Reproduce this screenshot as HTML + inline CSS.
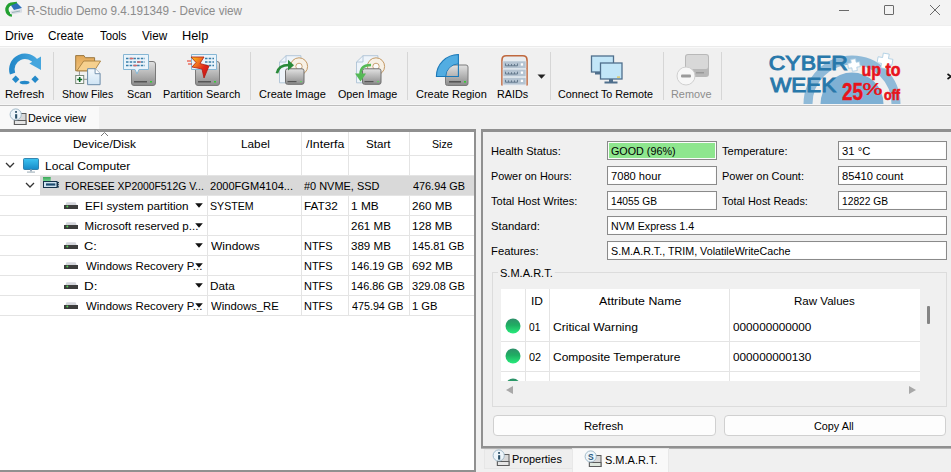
<!DOCTYPE html>
<html><head><meta charset="utf-8">
<style>
*{margin:0;padding:0;box-sizing:border-box}
html,body{width:951px;height:472px;overflow:hidden;background:#f0f0f0;font-family:"Liberation Sans",sans-serif;position:relative}
.a{position:absolute}
.t{position:absolute;white-space:nowrap;line-height:1;transform-origin:0 0}
.sep{position:absolute;top:52px;width:1px;height:48px;background:#d6d6d6}
.box{position:absolute;border:1px solid #8a8a8a;background:#fff;box-shadow:inset 0 0 0 1px #fcfcfc}
.hl{position:absolute;height:1px;background:#e4e4e4}
.vl{position:absolute;width:1px;background:#e4e4e4}
svg{position:absolute;overflow:visible}
</style></head><body>
<!-- title bar -->
<div class="a" style="left:0;top:0;width:951px;height:25px;background:#f3f3f3"></div>
<svg style="left:6px;top:2px" width="17" height="14" viewBox="0 0 17 14">
  <path d="M6 13 A5.5 5.5 0 0 1 5 2.2 L11 1.5" stroke="#22a030" stroke-width="3.4" fill="none" stroke-linejoin="round"/>
  <path d="M4 4 L16 1.5 L16 9 L4 12 Z" fill="#f2f6fa"/>
  <path d="M5 3.5 L11 1 L16 6 L8 8 Z" fill="#2f6fb8"/>
  <path d="M4.5 9 L16 7 L16 10.5 L5 12.5 Z" fill="#d8dde4"/>
  <path d="M6 10.5 L14 9" stroke="#8aa" stroke-width="0.8"/>
</svg>
<div class="a" style="left:839px;top:10px;width:10px;height:1px;background:#6a6a6a"></div>
<div class="a" style="left:884px;top:5px;width:10px;height:10px;border:1px solid #6a6a6a;border-radius:1px"></div>
<svg style="left:930px;top:5px" width="10" height="10" viewBox="0 0 10 10"><path d="M0 0L10 10M10 0L0 10" stroke="#6a6a6a" stroke-width="1"/></svg>
<!-- menu -->
<div class="a" style="left:0;top:25px;width:951px;height:1px;background:#efefef"></div>
<div class="a" style="left:0;top:26px;width:951px;height:20px;background:#fff"></div>
<div class="a" style="left:0;top:46px;width:951px;height:1px;background:#ebebeb"></div>
<div class="a" style="left:0;top:47px;width:951px;height:1px;background:#f9f9f9"></div>
<!-- toolbar -->
<div class="a" style="left:0;top:104px;width:951px;height:1px;background:#f6f6f6"></div>
<div class="a" style="left:0;top:105px;width:951px;height:1px;background:#bdbdbd"></div>
<div class="a" style="left:0;top:106px;width:951px;height:1px;background:#f6f6f6"></div>
<div class="sep" style="left:53px"></div>
<div class="sep" style="left:250px"></div>
<div class="sep" style="left:407px"></div>
<div class="sep" style="left:550px"></div>
<div class="sep" style="left:663px"></div>
<div class="sep" style="left:721px"></div>

<!-- refresh icon -->
<svg style="left:4px;top:50px" width="44" height="40" viewBox="0 0 44 40">
  <defs><linearGradient id="rf" x1="0" y1="0" x2="1" y2="0"><stop offset="0" stop-color="#2489c9"/><stop offset="1" stop-color="#45a6de"/></linearGradient></defs>
  <path d="M8.55 23.7 A13.15 13.15 0 0 1 32.4 12.9" stroke="url(#rf)" stroke-width="5.5" fill="none"/>
  <path d="M37 6.4 L37 20 L25.4 13.6 Z" fill="#45a6de"/>
  <path d="M11.7 25.6 L15.4 29.3 L11.7 33 L8 29.3 Z" fill="#2489c9"/>
  <path d="M31.1 25.6 L34.8 29.3 L31.1 33 L27.4 29.3 Z" fill="#2489c9"/>
  <ellipse cx="20.6" cy="32.5" rx="4.9" ry="1.8" fill="#2489c9"/>
</svg>
<!-- show files icon -->
<svg style="left:68px;top:50px" width="44" height="40" viewBox="0 0 44 40">
  <defs><linearGradient id="fd" x1="0" y1="0" x2="0" y2="1"><stop offset="0" stop-color="#e2a858"/><stop offset="1" stop-color="#f0c27a"/></linearGradient>
  <linearGradient id="dc" x1="0" y1="0" x2="0" y2="1"><stop offset="0" stop-color="#f4f9fd"/><stop offset="1" stop-color="#cfe4f4"/></linearGradient></defs>
  <path d="M11.45 21.2 V25 M15.7 29.3 H19.1" stroke="#8a8a8a" stroke-width="0.9"/>
  <path d="M7.7 5.6 H16 L17.3 7.7 H26.6 V20.8 H7.7 Z" fill="url(#fd)" stroke="#9a7840" stroke-width="1"/>
  <path d="M8.9 20.8 L15.7 11 H32.6 L26.3 20.8 Z" fill="#f6d08e" stroke="#a88040" stroke-width="0.9"/>
  <path d="M19.6 18.7 H27.1 L32.1 23.7 V34.7 H19.6 Z" fill="url(#dc)" stroke="#6a8aa8" stroke-width="1"/>
  <path d="M27.1 18.7 V23.7 H32.1" fill="#fff" stroke="#6a8aa8" stroke-width="0.9"/>
  <rect x="7.7" y="25.5" width="8" height="8" fill="#fafafa" stroke="#7a8a7a" stroke-width="1"/>
  <path d="M11.7 27 V32 M9.2 29.5 H14.2" stroke="#0a6a20" stroke-width="1.6"/>
</svg>
<!-- scan icon -->
<svg style="left:123px;top:54px" width="33" height="32" viewBox="0 0 33 32">
  <defs><linearGradient id="hd" x1="0" y1="0" x2="0" y2="1"><stop offset="0" stop-color="#e2e2e2"/><stop offset="0.65" stop-color="#a9a9a9"/><stop offset="1" stop-color="#8a8a8a"/></linearGradient></defs>
  <rect x="8.5" y="7.5" width="24" height="24" rx="2.5" fill="url(#hd)" stroke="#7a7a7a" stroke-width="1"/>
  <rect x="11" y="27" width="13" height="1.5" fill="#555"/>
  <rect x="27" y="27" width="2" height="1.5" fill="#3c3"/>
  <path d="M0.5 0.5 H25.5 V15.5 H16 L14 20 L12 15.5 H0.5 Z" fill="#eaf4fb" stroke="#86b6d4" stroke-width="1"/>
  <path d="M3 4.5 H22 M3 8 H22 M3 11.5 H22" stroke="#3a7ea8" stroke-width="1.3" stroke-dasharray="2.5 1.2"/>
  <path d="M6.7 4.5 H10.4 M14.1 8 H17.8 M10.4 11.5 H14.1" stroke="#d46a6a" stroke-width="1.3"/>
</svg>
<!-- partition search icon -->
<svg style="left:187px;top:54px" width="33" height="32" viewBox="0 0 33 32">
  <rect x="8.5" y="7.5" width="24" height="24" rx="2.5" fill="url(#hd)" stroke="#7a7a7a" stroke-width="1"/>
  <rect x="11" y="27" width="13" height="1.5" fill="#555"/>
  <rect x="27" y="27" width="2" height="1.5" fill="#3c3"/>
  <path d="M4.5 0.5 H29.5 V15.5 H4.5 Z" fill="#eaf4fb" stroke="#86b6d4" stroke-width="1"/>
  <path d="M18 4.5 H27 M18 8 H27 M18 11.5 H27" stroke="#3a7ea8" stroke-width="1.3" stroke-dasharray="2.5 1.2"/>
  <defs><linearGradient id="bolt" x1="0" y1="0" x2="1" y2="1"><stop offset="0" stop-color="#f8c41c"/><stop offset="0.35" stop-color="#f07020"/><stop offset="0.6" stop-color="#e0281c"/><stop offset="1" stop-color="#c01010"/></linearGradient></defs>
  <path d="M4 3 H17 L13 9.5 L22 12 L17 24 L15 15 L5 13 L9 8.5 Z" fill="url(#bolt)" stroke="#b01a10" stroke-width="0.8"/>
  <path d="M0 7 H4 M1 10 H5" stroke="#e8301a" stroke-width="1.2"/>
</svg>
<!-- create image icon -->
<svg style="left:270px;top:50px" width="40" height="38" viewBox="0 0 40 38">
  <path d="M9.5 12 L16 5.7 H30.9 V32.8 H9.5 Z" fill="#eef4fa" stroke="#a4bcd2" stroke-width="0.8"/>
  <path d="M9.5 12 H16 V5.7" fill="none" stroke="#a4bcd2" stroke-width="0.8"/>
  <circle cx="29" cy="16.4" r="8.6" fill="#f7f1e6" stroke="#c49a66" stroke-width="1"/>
  <circle cx="29" cy="16.4" r="3.2" fill="#fbfbfb" stroke="#c49a66" stroke-width="0.9"/>
  <rect x="15.5" y="18.8" width="18.5" height="15.5" rx="2" fill="url(#hd)" stroke="#6e6e6e" stroke-width="1"/>
  <rect x="17.5" y="31" width="9" height="1.2" fill="#555"/>
  <rect x="30" y="31" width="2" height="1.2" fill="#6c6"/>
  <path d="M6.9 23.3 C8 17.5 12.5 15 19 15" stroke="#2a8a3a" stroke-width="2.6" fill="none"/><path d="M18 9.8 L24 15.2 L18 20.6 Z" fill="#2a8a3a"/>
</svg>
<!-- open image icon -->
<svg style="left:347px;top:50px" width="40" height="38" viewBox="0 0 40 38">
  <path d="M9.5 12 L16 5.7 H30.9 V32.8 H9.5 Z" fill="#eef4fa" stroke="#a4bcd2" stroke-width="0.8"/>
  <path d="M9.5 12 H16 V5.7" fill="none" stroke="#a4bcd2" stroke-width="0.8"/>
  <circle cx="29" cy="16.4" r="8.6" fill="#f7f1e6" stroke="#c49a66" stroke-width="1"/>
  <circle cx="29" cy="16.4" r="3.2" fill="#fbfbfb" stroke="#c49a66" stroke-width="0.9"/>
  <rect x="15.5" y="18.8" width="18.5" height="15.5" rx="2" fill="url(#hd)" stroke="#6e6e6e" stroke-width="1"/>
  <rect x="17.5" y="31" width="9" height="1.2" fill="#555"/>
  <rect x="30" y="31" width="2" height="1.2" fill="#6c6"/>
  <path d="M24 15 C17.5 15 13.5 17 13.5 24.5" stroke="#55b955" stroke-width="2.6" fill="none"/><path d="M8 23.5 H19 L13.5 31.5 Z" fill="#55b955"/>
</svg>
<!-- create region icon -->
<svg style="left:435px;top:54px" width="34" height="32" viewBox="0 0 34 32">
  <rect x="10.5" y="11" width="22.5" height="20.5" rx="2" fill="url(#hd)" stroke="#7a7a7a" stroke-width="1"/>
  <rect x="14" y="27" width="12" height="1.6" fill="#555"/>
  <rect x="29" y="27" width="2" height="1.6" fill="#3c3"/>
  <path d="M1.4 22.5 A22 22 0 0 1 23.4 0.5 V9.9 A12.6 12.6 0 0 0 10.8 22.5 Z" fill="#52ade2"/>
  <path d="M1.4 22.5 A22 22 0 0 1 23.4 0.5 V22.5 Z" fill="none" stroke="#1a78b8" stroke-width="1.1"/>
  <path d="M10.8 22.5 A12.6 12.6 0 0 1 23.4 9.9" fill="none" stroke="#1a78b8" stroke-width="0.9"/>
</svg>
<!-- RAIDs icon -->
<svg style="left:501px;top:55px" width="27" height="31" viewBox="0 0 27 31">
  <path d="M1 30.5 V5 Q1 0.8 5.2 0.8 H21.8 Q26 0.8 26 5 V30.5" fill="#e9ecef" stroke="#c0683e" stroke-width="1.6"/>
  <rect x="2" y="6" width="23" height="7.5" fill="#b4c3d1" stroke="#e8eef3" stroke-width="0.6"/>
  <rect x="2" y="14.2" width="23" height="7.5" fill="#b4c3d1" stroke="#e8eef3" stroke-width="0.6"/>
  <rect x="2" y="22.4" width="23" height="7.5" fill="#b4c3d1" stroke="#e8eef3" stroke-width="0.6"/>
  <path d="M4.5 8.5 V10.8 H16.5 V8.5 M7.5 10.8 V9 M10.5 10.8 V9 M13.5 10.8 V9 M4.5 16.7 V19 H16.5 V16.7 M7.5 19 V17.2 M10.5 19 V17.2 M13.5 19 V17.2 M4.5 24.9 V27.2 H16.5 V24.9 M7.5 27.2 V25.4 M10.5 27.2 V25.4 M13.5 27.2 V25.4" stroke="#5f7488" stroke-width="0.9" fill="none"/>
  <rect x="19.8" y="8.3" width="2.3" height="2.3" fill="#fff"/><rect x="19.8" y="16.5" width="2.3" height="2.3" fill="#fff"/><rect x="19.8" y="24.7" width="2.3" height="2.3" fill="#fff"/>
</svg>
<svg style="left:537px;top:74px" width="9" height="5" viewBox="0 0 9 5"><path d="M0.5 0.5H8.5L4.5 4.8Z" fill="#222"/></svg>
<!-- connect icon -->
<svg style="left:590px;top:55px" width="34" height="29" viewBox="0 0 34 29">
  <rect x="1.5" y="1" width="22" height="16" fill="#c2e6f8" stroke="#4f6f8c" stroke-width="1.3"/>
  <rect x="5" y="17" width="5" height="2.5" fill="#4f6f8c"/>
  <rect x="10.5" y="8" width="21.5" height="16" fill="#c2e6f8" stroke="#4f6f8c" stroke-width="1.3"/>
  <rect x="27" y="21.5" width="3" height="1.2" fill="#e8c040"/>
  <rect x="19" y="24" width="4" height="3" fill="#4f6f8c"/>
  <rect x="14.5" y="26.5" width="13" height="2" fill="#4f6f8c"/>
</svg>
<!-- remove icon (disabled) -->
<svg style="left:676px;top:53px" width="34" height="33" viewBox="0 0 34 33">
  <rect x="9" y="1" width="24" height="23" rx="3" fill="#b8b8b8"/>
  <rect x="10" y="2" width="22" height="14" rx="2" fill="#d8d8d8"/>
  <rect x="20" y="19" width="8" height="1.5" fill="#999"/>
  <circle cx="10" cy="23" r="9" fill="#f7f7f7" stroke="#d0d0d0" stroke-width="1"/>
  <rect x="5" y="21.5" width="10" height="3" rx="1" fill="#9a9a9a"/>
</svg>
<!-- banner -->
<svg style="left:762px;top:48px" width="145" height="57" viewBox="0 0 145 57">
  <path d="M46 56 A44 44 0 0 1 134 56" stroke="#8fbad8" stroke-width="9" fill="none"/>
  <path d="M58.5 56 A31.5 31.5 0 0 1 121.5 56 Z" fill="#7eb0d4"/>
  <g transform="translate(92 17) rotate(-8)"><path d="M-2.5 -6 h5 v3.5 h3.5 v5 h-3.5 v3.5 h-5 v-3.5 h-3.5 v-5 h3.5 z" fill="#ffffff" stroke="#a9cbe2" stroke-width="0.8"/></g>
  <g transform="translate(123 13) rotate(10)"><path d="M-3 -7.5 h6 v4.5 h4.5 v6 h-4.5 v4.5 h-6 v-4.5 h-4.5 v-6 h4.5 z" fill="#ffffff" stroke="#a9cbe2" stroke-width="0.8"/></g>
  <text x="6.8" y="22" font-family="Liberation Sans" font-size="19.5" fill="#2878aa" stroke="#2878aa" stroke-width="0.9" textLength="79" lengthAdjust="spacingAndGlyphs">CYBER</text>
  <text x="8.2" y="43.8" font-family="Liberation Sans" font-size="19.5" fill="#2878aa" stroke="#2878aa" stroke-width="0.9" textLength="66" lengthAdjust="spacingAndGlyphs">WEEK</text>
  <text x="99.5" y="27.5" font-family="Liberation Sans" font-weight="bold" font-size="17.5" fill="#e8141c" stroke="#e8141c" stroke-width="0.6" textLength="39" lengthAdjust="spacingAndGlyphs">up to</text>
  <text x="80" y="52" font-family="Liberation Sans" font-weight="bold" font-size="23" fill="#e8141c" stroke="#e8141c" stroke-width="0.4" textLength="21" lengthAdjust="spacingAndGlyphs">25</text>
  <text x="100.5" y="47" font-family="Liberation Sans" font-weight="bold" font-size="17" fill="#e8141c" textLength="20" lengthAdjust="spacingAndGlyphs">%</text>
  <text x="122" y="52" font-family="Liberation Sans" font-weight="bold" font-size="14" fill="#e8141c" stroke="#e8141c" stroke-width="0.6" textLength="16" lengthAdjust="spacingAndGlyphs">off</text>
</svg>
<svg style="left:946px;top:73px" width="6" height="7" viewBox="0 0 6 7"><path d="M1.5 1 L5 3.5 L1.5 6" stroke="#111" stroke-width="1.6" fill="none"/></svg>

<!-- tab strip -->
<div class="a" style="left:0;top:106px;width:99px;height:23px;background:#f9f9f9"></div>
<svg style="left:6px;top:106px" width="24" height="22" viewBox="0 0 24 22">
  <rect x="8.4" y="7.5" width="11.6" height="11" fill="#d8d8d8" stroke="#5c5c5c" stroke-width="1"/>
  <rect x="8.4" y="14.5" width="11.6" height="4" fill="#e6e6e6" stroke="#5c5c5c" stroke-width="1"/>
  <circle cx="9.7" cy="8.5" r="5.6" fill="#edf5fa" stroke="#9ab3c4" stroke-width="0.9"/>
  <rect x="9.1" y="5.1" width="1.9" height="1.7" fill="#2a5068"/><rect x="9.1" y="8.2" width="2.1" height="4.4" fill="#2a5068"/>
</svg>

<!-- dark top line -->
<div class="a" style="left:0;top:129px;width:476px;height:3px;background:#909090"></div>
<div class="a" style="left:481px;top:129px;width:470px;height:3px;background:#909090"></div>

<!-- LEFT PANEL -->
<div class="a" style="left:0;top:132px;width:474px;height:338px;background:#fff"></div>
<div class="a" style="left:474px;top:129px;width:2px;height:343px;background:#909090"></div>
<div class="a" style="left:0;top:470px;width:476px;height:2px;background:#909090"></div>
<!-- grid -->
<div class="hl" style="left:0;top:155px;width:474px"></div>
<div class="vl" style="left:207px;top:132px;height:183px"></div>
<div class="vl" style="left:301px;top:132px;height:183px"></div>
<div class="vl" style="left:348px;top:132px;height:183px"></div>
<div class="vl" style="left:409px;top:132px;height:183px"></div>
<div class="hl" style="left:0;top:175px;width:474px"></div>
<div class="hl" style="left:0;top:195px;width:474px"></div>
<div class="hl" style="left:0;top:215px;width:474px"></div>
<div class="hl" style="left:0;top:235px;width:474px"></div>
<div class="hl" style="left:0;top:255px;width:474px"></div>
<div class="hl" style="left:0;top:275px;width:474px"></div>
<div class="hl" style="left:0;top:295px;width:474px"></div>
<div class="hl" style="left:0;top:315px;width:474px"></div>
<!-- selected row -->
<div class="a" style="left:40px;top:176px;width:434px;height:19px;background:#d9d9d9"></div>
<!-- sort arrow -->
<svg style="left:100px;top:131px" width="9" height="6" viewBox="0 0 9 6"><path d="M1 5 L4.5 1.5 L8 5" stroke="#777" stroke-width="1" fill="none"/></svg>
<!-- chevrons -->
<svg style="left:5px;top:162px" width="10" height="6" viewBox="0 0 10 6"><path d="M1 1 L5 5 L9 1" stroke="#333" stroke-width="1.3" fill="none"/></svg>
<svg style="left:25px;top:182px" width="10" height="6" viewBox="0 0 10 6"><path d="M1 1 L5 5 L9 1" stroke="#333" stroke-width="1.3" fill="none"/></svg>
<!-- monitor icon -->
<svg style="left:23px;top:158px" width="16" height="15" viewBox="0 0 16 15">
  <defs><linearGradient id="mn" x1="0" y1="0" x2="0" y2="1"><stop offset="0" stop-color="#3cc4f2"/><stop offset="1" stop-color="#168ac8"/></linearGradient></defs>
  <rect x="0.5" y="0.5" width="15" height="11" rx="1" fill="url(#mn)" stroke="#1a6f9e" stroke-width="0.8"/>
  <rect x="7" y="11.5" width="2" height="2" fill="#9ab"/>
  <rect x="4" y="13.5" width="8" height="1.2" fill="#aab8c0"/>
</svg>
<!-- nvme icon -->
<svg style="left:43px;top:177px" width="16" height="11" viewBox="0 0 16 11">
  <defs><linearGradient id="gt" x1="0" y1="0" x2="0" y2="1"><stop offset="0" stop-color="#3aa858"/><stop offset="1" stop-color="#7ed89a"/></linearGradient></defs>
  <rect x="0" y="0" width="7.7" height="5" fill="url(#gt)"/>
  <rect x="0.5" y="4.5" width="13.5" height="6" fill="#cfe3f1" stroke="#15324a" stroke-width="1"/>
  <rect x="3" y="6.4" width="9.3" height="2.2" fill="#1d4b6e"/>
  <path d="M14 5 H16 V6.3 H15 V7.2 H16 V8.3 H15 V9.2 H16 V10.5 H14 Z" fill="#15324a"/>
</svg>
<svg style="left:64px;top:202px" width="14" height="7" viewBox="0 0 14 7"><path d="M1.2 3.2 L2.5 0.2 H11.5 L12.8 3.2 Z" fill="#d4d6dc"/><rect x="0" y="3" width="14" height="4" fill="#3c3c3c"/><circle cx="3.3" cy="4.6" r="1" fill="#5c5"/></svg>
<svg style="left:195px;top:203px" width="8" height="5" viewBox="0 0 8 5"><path d="M0.2 0.3H7.8L4 4.8Z" fill="#111"/></svg>
<svg style="left:64px;top:222px" width="14" height="7" viewBox="0 0 14 7"><path d="M1.2 3.2 L2.5 0.2 H11.5 L12.8 3.2 Z" fill="#d4d6dc"/><rect x="0" y="3" width="14" height="4" fill="#3c3c3c"/><circle cx="3.3" cy="4.6" r="1" fill="#5c5"/></svg>
<svg style="left:195px;top:223px" width="8" height="5" viewBox="0 0 8 5"><path d="M0.2 0.3H7.8L4 4.8Z" fill="#111"/></svg>
<svg style="left:64px;top:242px" width="14" height="7" viewBox="0 0 14 7"><path d="M1.2 3.2 L2.5 0.2 H11.5 L12.8 3.2 Z" fill="#d4d6dc"/><rect x="0" y="3" width="14" height="4" fill="#3c3c3c"/><circle cx="3.3" cy="4.6" r="1" fill="#5c5"/></svg>
<svg style="left:195px;top:243px" width="8" height="5" viewBox="0 0 8 5"><path d="M0.2 0.3H7.8L4 4.8Z" fill="#111"/></svg>
<svg style="left:64px;top:262px" width="14" height="7" viewBox="0 0 14 7"><path d="M1.2 3.2 L2.5 0.2 H11.5 L12.8 3.2 Z" fill="#d4d6dc"/><rect x="0" y="3" width="14" height="4" fill="#3c3c3c"/><circle cx="3.3" cy="4.6" r="1" fill="#5c5"/></svg>
<svg style="left:195px;top:263px" width="8" height="5" viewBox="0 0 8 5"><path d="M0.2 0.3H7.8L4 4.8Z" fill="#111"/></svg>
<svg style="left:64px;top:282px" width="14" height="7" viewBox="0 0 14 7"><path d="M1.2 3.2 L2.5 0.2 H11.5 L12.8 3.2 Z" fill="#d4d6dc"/><rect x="0" y="3" width="14" height="4" fill="#3c3c3c"/><circle cx="3.3" cy="4.6" r="1" fill="#5c5"/></svg>
<svg style="left:195px;top:283px" width="8" height="5" viewBox="0 0 8 5"><path d="M0.2 0.3H7.8L4 4.8Z" fill="#111"/></svg>
<svg style="left:64px;top:302px" width="14" height="7" viewBox="0 0 14 7"><path d="M1.2 3.2 L2.5 0.2 H11.5 L12.8 3.2 Z" fill="#d4d6dc"/><rect x="0" y="3" width="14" height="4" fill="#3c3c3c"/><circle cx="3.3" cy="4.6" r="1" fill="#5c5"/></svg>
<svg style="left:195px;top:303px" width="8" height="5" viewBox="0 0 8 5"><path d="M0.2 0.3H7.8L4 4.8Z" fill="#111"/></svg>
<!-- right panel border -->
<div class="a" style="left:481px;top:129px;width:2px;height:320px;background:#909090"></div>
<div class="a" style="left:481px;top:446px;width:470px;height:2px;background:#909090"></div>
<div class="a" style="left:481px;top:448px;width:470px;height:1px;background:#b4b4b4"></div>
<!-- property boxes -->
<div class="box" style="left:607px;top:141px;width:110px;height:19px;background:#8ee68e"></div>
<div class="box" style="left:607px;top:166px;width:110px;height:19px"></div>
<div class="box" style="left:607px;top:191px;width:110px;height:19px"></div>
<div class="box" style="left:607px;top:216px;width:340px;height:19px"></div>
<div class="box" style="left:607px;top:241px;width:340px;height:19px"></div>
<div class="box" style="left:838px;top:141px;width:109px;height:19px"></div>
<div class="box" style="left:838px;top:166px;width:109px;height:19px"></div>
<div class="box" style="left:838px;top:191px;width:109px;height:19px"></div>
<!-- smart group -->
<div class="a" style="left:492px;top:272px;width:455px;height:135px;border:1px solid #dcdcdc"></div>
<div class="a" style="left:501px;top:289px;width:419px;height:92px;background:#fff"></div>
<div class="vl" style="left:525px;top:289px;height:92px"></div>
<div class="vl" style="left:549px;top:289px;height:92px"></div>
<div class="vl" style="left:729px;top:289px;height:92px"></div>
<div class="hl" style="left:501px;top:341px;width:419px"></div>
<div class="hl" style="left:501px;top:371px;width:419px"></div>
<!-- green leds -->
<svg style="left:505px;top:318px" width="16" height="64" viewBox="0 0 16 64">
  <defs><linearGradient id="g" x1="0" y1="0" x2="0" y2="1"><stop offset="0" stop-color="#2f8f6a"/><stop offset="0.45" stop-color="#1fae62"/><stop offset="1" stop-color="#28ec7c"/></linearGradient>
  <clipPath id="c"><rect x="0" y="0" width="16" height="63"/></clipPath></defs>
  <g clip-path="url(#c)">
  <circle cx="8" cy="8" r="7.5" fill="url(#g)"/>
  <circle cx="8" cy="38" r="7.5" fill="url(#g)"/>
  <circle cx="8" cy="68" r="7.5" fill="url(#g)"/>
  </g>
</svg>
<svg style="left:506px;top:386px" width="7" height="8" viewBox="0 0 7 8"><path d="M7 0 V8 L0 4 Z" fill="#a8a8a8"/></svg>
<svg style="left:909px;top:386px" width="7" height="8" viewBox="0 0 7 8"><path d="M0 0 V8 L7 4 Z" fill="#a8a8a8"/></svg>
<div class="a" style="left:927px;top:306px;width:3px;height:18px;background:#858585;border-radius:1px"></div>
<!-- buttons -->
<div class="a" style="left:493px;top:415px;width:223px;height:21px;background:#fdfdfd;border:1px solid #d0d0d0;border-radius:4px"></div>
<div class="a" style="left:724px;top:415px;width:222px;height:21px;background:#fdfdfd;border:1px solid #d0d0d0;border-radius:4px"></div>
<!-- bottom tabs -->
<div class="a" style="left:484px;top:449px;width:89px;height:20px;background:#eeeeee;border:1px solid #e6e6e6"></div>
<div class="a" style="left:572px;top:448px;width:97px;height:24px;background:#f9f9f9;border:1px solid #e8e8e8;border-bottom:none"></div>
<svg style="left:489px;top:447px" width="24" height="22" viewBox="0 0 24 22">
  <rect x="8.4" y="7.5" width="11.6" height="11" fill="#d8d8d8" stroke="#5c5c5c" stroke-width="1"/>
  <rect x="8.4" y="14.5" width="11.6" height="4" fill="#e6e6e6" stroke="#5c5c5c" stroke-width="1"/>
  <circle cx="9.7" cy="8.5" r="5.6" fill="#edf5fa" stroke="#9ab3c4" stroke-width="0.9"/>
  <rect x="9.1" y="5.1" width="1.9" height="1.7" fill="#2a5068"/><rect x="9.1" y="8.2" width="2.1" height="4.4" fill="#2a5068"/>
</svg>
<svg style="left:581px;top:448px" width="24" height="22" viewBox="0 0 24 22">
  <rect x="8.4" y="7.5" width="11.6" height="11" fill="#d8d8d8" stroke="#5c5c5c" stroke-width="1"/>
  <rect x="8.4" y="14.5" width="11.6" height="4" fill="#dfe8df" stroke="#5c5c5c" stroke-width="1"/>
  <circle cx="9.7" cy="8.5" r="5.6" fill="#edf5fa" stroke="#9ab3c4" stroke-width="0.9"/>
  <text x="9.8" y="11.6" text-anchor="middle" font-family="Liberation Sans" font-weight="bold" font-size="8.5" fill="#2a5a80">S</text>
</svg>
<div class="t" style="left:26.62px;top:5px;font-size:12px;color:#8c8c8c;transform:scaleX(0.9772);">R-Studio Demo 9.4.191349 - Device view</div>
<div class="t" style="left:5.48px;top:30px;font-size:12px;color:#000;transform:scaleX(1.0192);">Drive</div>
<div class="t" style="left:48.31px;top:30px;font-size:12px;color:#000;transform:scaleX(0.9853);">Create</div>
<div class="t" style="left:99.50px;top:30px;font-size:12px;color:#000;transform:scaleX(0.9464);">Tools</div>
<div class="t" style="left:141.60px;top:30px;font-size:12px;color:#000;transform:scaleX(0.9769);">View</div>
<div class="t" style="left:182.13px;top:30px;font-size:12px;color:#000;transform:scaleX(1.0652);">Help</div>
<div class="t" style="left:4.63px;top:89px;font-size:11.5px;color:#000;transform:scaleX(0.9737);">Refresh</div>
<div class="t" style="left:61.59px;top:89px;font-size:11.5px;color:#000;transform:scaleX(0.9091);">Show Files</div>
<div class="t" style="left:126.76px;top:89px;font-size:11.5px;color:#000;transform:scaleX(0.9375);">Scan</div>
<div class="t" style="left:163.45px;top:89px;font-size:11.5px;color:#000;transform:scaleX(0.9463);">Partition Search</div>
<div class="t" style="left:258.84px;top:89px;font-size:11.5px;color:#000;transform:scaleX(0.9588);">Create Image</div>
<div class="t" style="left:337.86px;top:89px;font-size:11.5px;color:#000;transform:scaleX(0.9355);">Open Image</div>
<div class="t" style="left:415.65px;top:89px;font-size:11.5px;color:#000;transform:scaleX(0.9542);">Create Region</div>
<div class="t" style="left:497.36px;top:89px;font-size:11.5px;color:#000;transform:scaleX(0.9375);">RAIDs</div>
<div class="t" style="left:558.36px;top:89px;font-size:11.5px;color:#000;transform:scaleX(0.9370);">Connect To Remote</div>
<div class="t" style="left:671.25px;top:89px;font-size:11.5px;color:#8d8d8d;transform:scaleX(0.9463);">Remove</div>
<div class="t" style="left:28.45px;top:113px;font-size:11.5px;color:#000;transform:scaleX(0.9450);">Device view</div>
<div class="t" style="left:72.56px;top:139px;font-size:11.5px;color:#000;transform:scaleX(1.0356);">Device/Disk</div>
<div class="t" style="left:240.88px;top:139px;font-size:11.5px;color:#000;transform:scaleX(1.0231);">Label</div>
<div class="t" style="left:305.90px;top:139px;font-size:11.5px;color:#000;transform:scaleX(1.0722);">/Interfa</div>
<div class="t" style="left:366.49px;top:139px;font-size:11.5px;color:#000;transform:scaleX(1.0087);">Start</div>
<div class="t" style="left:431.58px;top:139px;font-size:11.5px;color:#000;transform:scaleX(0.9190);">Size</div>
<div class="t" style="left:44.65px;top:161px;font-size:11.5px;color:#000;transform:scaleX(1.0500);">Local Computer</div>
<div class="t" style="left:64.50px;top:181px;font-size:11.5px;color:#000;transform:scaleX(0.9033);">FORESEE XP2000F512G V...</div>
<div class="t" style="left:210.44px;top:181px;font-size:11.5px;color:#000;transform:scaleX(0.9619);">2000FGM4104...</div>
<div class="t" style="left:304.35px;top:181px;font-size:11.5px;color:#000;transform:scaleX(0.9513);">#0 NVME, SSD</div>
<div class="t" style="left:412.80px;top:181px;font-size:11.5px;color:#000;transform:scaleX(0.9444);">476.94 GB</div>
<div class="t" style="left:84.58px;top:201px;font-size:11.5px;color:#000;transform:scaleX(1.0200);">EFI system partition</div>
<div class="t" style="left:210.38px;top:201px;font-size:11.5px;color:#000;transform:scaleX(0.9222);">SYSTEM</div>
<div class="t" style="left:304.28px;top:201px;font-size:11.5px;color:#000;transform:scaleX(1.0226);">FAT32</div>
<div class="t" style="left:351.37px;top:201px;font-size:11.5px;color:#000;transform:scaleX(1.0320);">1 MB</div>
<div class="t" style="left:411.78px;top:201px;font-size:11.5px;color:#000;transform:scaleX(1.0158);">260 MB</div>
<div class="t" style="left:84.60px;top:221px;font-size:11.5px;color:#000;transform:scaleX(1.0000);">Microsoft reserved p...</div>
<div class="t" style="left:351.39px;top:221px;font-size:11.5px;color:#000;transform:scaleX(1.0053);">261 MB</div>
<div class="t" style="left:411.78px;top:221px;font-size:11.5px;color:#000;transform:scaleX(1.0158);">128 MB</div>
<div class="t" style="left:84.49px;top:241px;font-size:11.5px;color:#000;transform:scaleX(1.1111);">C:</div>
<div class="t" style="left:211.30px;top:241px;font-size:11.5px;color:#000;transform:scaleX(1.0435);">Windows</div>
<div class="t" style="left:304.35px;top:241px;font-size:11.5px;color:#000;transform:scaleX(0.9536);">NTFS</div>
<div class="t" style="left:351.39px;top:241px;font-size:11.5px;color:#000;transform:scaleX(1.0053);">389 MB</div>
<div class="t" style="left:411.85px;top:241px;font-size:11.5px;color:#000;transform:scaleX(0.9509);">145.81 GB</div>
<div class="t" style="left:85.60px;top:261px;font-size:11.5px;color:#000;transform:scaleX(0.9914);">Windows Recovery P...</div>
<div class="t" style="left:304.35px;top:261px;font-size:11.5px;color:#000;transform:scaleX(0.9536);">NTFS</div>
<div class="t" style="left:351.45px;top:261px;font-size:11.5px;color:#000;transform:scaleX(0.9509);">146.19 GB</div>
<div class="t" style="left:411.77px;top:261px;font-size:11.5px;color:#000;transform:scaleX(1.0316);">692 MB</div>
<div class="t" style="left:84.43px;top:281px;font-size:11.5px;color:#000;transform:scaleX(1.1667);">D:</div>
<div class="t" style="left:210.28px;top:281px;font-size:11.5px;color:#000;transform:scaleX(1.0217);">Data</div>
<div class="t" style="left:304.35px;top:281px;font-size:11.5px;color:#000;transform:scaleX(0.9536);">NTFS</div>
<div class="t" style="left:351.45px;top:281px;font-size:11.5px;color:#000;transform:scaleX(0.9509);">146.86 GB</div>
<div class="t" style="left:411.84px;top:281px;font-size:11.5px;color:#000;transform:scaleX(0.9604);">329.08 GB</div>
<div class="t" style="left:85.60px;top:301px;font-size:11.5px;color:#000;transform:scaleX(0.9914);">Windows Recovery P...</div>
<div class="t" style="left:211.30px;top:301px;font-size:11.5px;color:#000;transform:scaleX(0.9824);">Windows_RE</div>
<div class="t" style="left:304.35px;top:301px;font-size:11.5px;color:#000;transform:scaleX(0.9536);">NTFS</div>
<div class="t" style="left:352.40px;top:301px;font-size:11.5px;color:#000;transform:scaleX(0.9333);">475.94 GB</div>
<div class="t" style="left:411.82px;top:301px;font-size:11.5px;color:#000;transform:scaleX(0.9760);">1 GB</div>
<div class="t" style="left:490.83px;top:146px;font-size:11.5px;color:#000;transform:scaleX(0.9657);">Health Status:</div>
<div class="t" style="left:490.86px;top:171px;font-size:11.5px;color:#000;transform:scaleX(0.9440);">Power on Hours:</div>
<div class="t" style="left:490.84px;top:196px;font-size:11.5px;color:#000;transform:scaleX(0.9602);">Total Host Writes:</div>
<div class="t" style="left:490.82px;top:221px;font-size:11.5px;color:#000;transform:scaleX(0.9792);">Standard:</div>
<div class="t" style="left:490.82px;top:246px;font-size:11.5px;color:#000;transform:scaleX(0.9787);">Features:</div>
<div class="t" style="left:721.93px;top:146px;font-size:11.5px;color:#000;transform:scaleX(0.9667);">Temperature:</div>
<div class="t" style="left:721.94px;top:171px;font-size:11.5px;color:#000;transform:scaleX(0.9571);">Power on Count:</div>
<div class="t" style="left:721.95px;top:196px;font-size:11.5px;color:#000;transform:scaleX(0.9461);">Total Host Reads:</div>
<div class="t" style="left:611.06px;top:146px;font-size:11.5px;color:#000;transform:scaleX(0.9358);">GOOD (96%)</div>
<div class="t" style="left:611.03px;top:171px;font-size:11.5px;color:#000;transform:scaleX(0.9680);">7080 hour</div>
<div class="t" style="left:611.11px;top:196px;font-size:11.5px;color:#000;transform:scaleX(0.8880);">14055 GB</div>
<div class="t" style="left:611.07px;top:221px;font-size:11.5px;color:#000;transform:scaleX(0.9284);">NVM Express 1.4</div>
<div class="t" style="left:611.07px;top:246px;font-size:11.5px;color:#000;transform:scaleX(0.9319);">S.M.A.R.T., TRIM, VolatileWriteCache</div>
<div class="t" style="left:842.02px;top:146px;font-size:11.5px;color:#000;transform:scaleX(0.9778);">31 °C</div>
<div class="t" style="left:842.03px;top:171px;font-size:11.5px;color:#000;transform:scaleX(0.9677);">85410 count</div>
<div class="t" style="left:842.11px;top:196px;font-size:11.5px;color:#000;transform:scaleX(0.8900);">12822 GB</div>
<div class="t" style="left:499.74px;top:268px;font-size:11.5px;color:#000;transform:scaleX(0.9623);background:#f0f0f0;padding:0 2px;margin-left:-2px;">S.M.A.R.T.</div>
<div class="t" style="left:530.96px;top:296px;font-size:11.5px;color:#000;transform:scaleX(1.0400);">ID</div>
<div class="t" style="left:599.30px;top:296px;font-size:11.5px;color:#000;transform:scaleX(1.0737);">Attribute Name</div>
<div class="t" style="left:793.99px;top:296px;font-size:11.5px;color:#000;transform:scaleX(1.0051);">Raw Values</div>
<div class="t" style="left:528.72px;top:322px;font-size:11.5px;color:#000;transform:scaleX(0.8818);">01</div>
<div class="t" style="left:553.15px;top:322px;font-size:11.5px;color:#000;transform:scaleX(1.0532);">Critical Warning</div>
<div class="t" style="left:733.18px;top:322px;font-size:11.5px;color:#000;transform:scaleX(1.0213);">000000000000</div>
<div class="t" style="left:528.65px;top:352px;font-size:11.5px;color:#000;transform:scaleX(0.9455);">02</div>
<div class="t" style="left:553.16px;top:352px;font-size:11.5px;color:#000;transform:scaleX(1.0405);">Composite Temperature</div>
<div class="t" style="left:733.18px;top:352px;font-size:11.5px;color:#000;transform:scaleX(1.0213);">000000000130</div>
<div class="t" style="left:584.43px;top:421px;font-size:11.5px;color:#000;transform:scaleX(0.9737);">Refresh</div>
<div class="t" style="left:814.26px;top:421px;font-size:11.5px;color:#000;transform:scaleX(0.9415);">Copy All</div>
<div class="t" style="left:511.95px;top:454px;font-size:11.5px;color:#000;transform:scaleX(0.9510);">Properties</div>
<div class="t" style="left:604.95px;top:455px;font-size:11.5px;color:#000;transform:scaleX(0.9547);">S.M.A.R.T.</div>
</body></html>
